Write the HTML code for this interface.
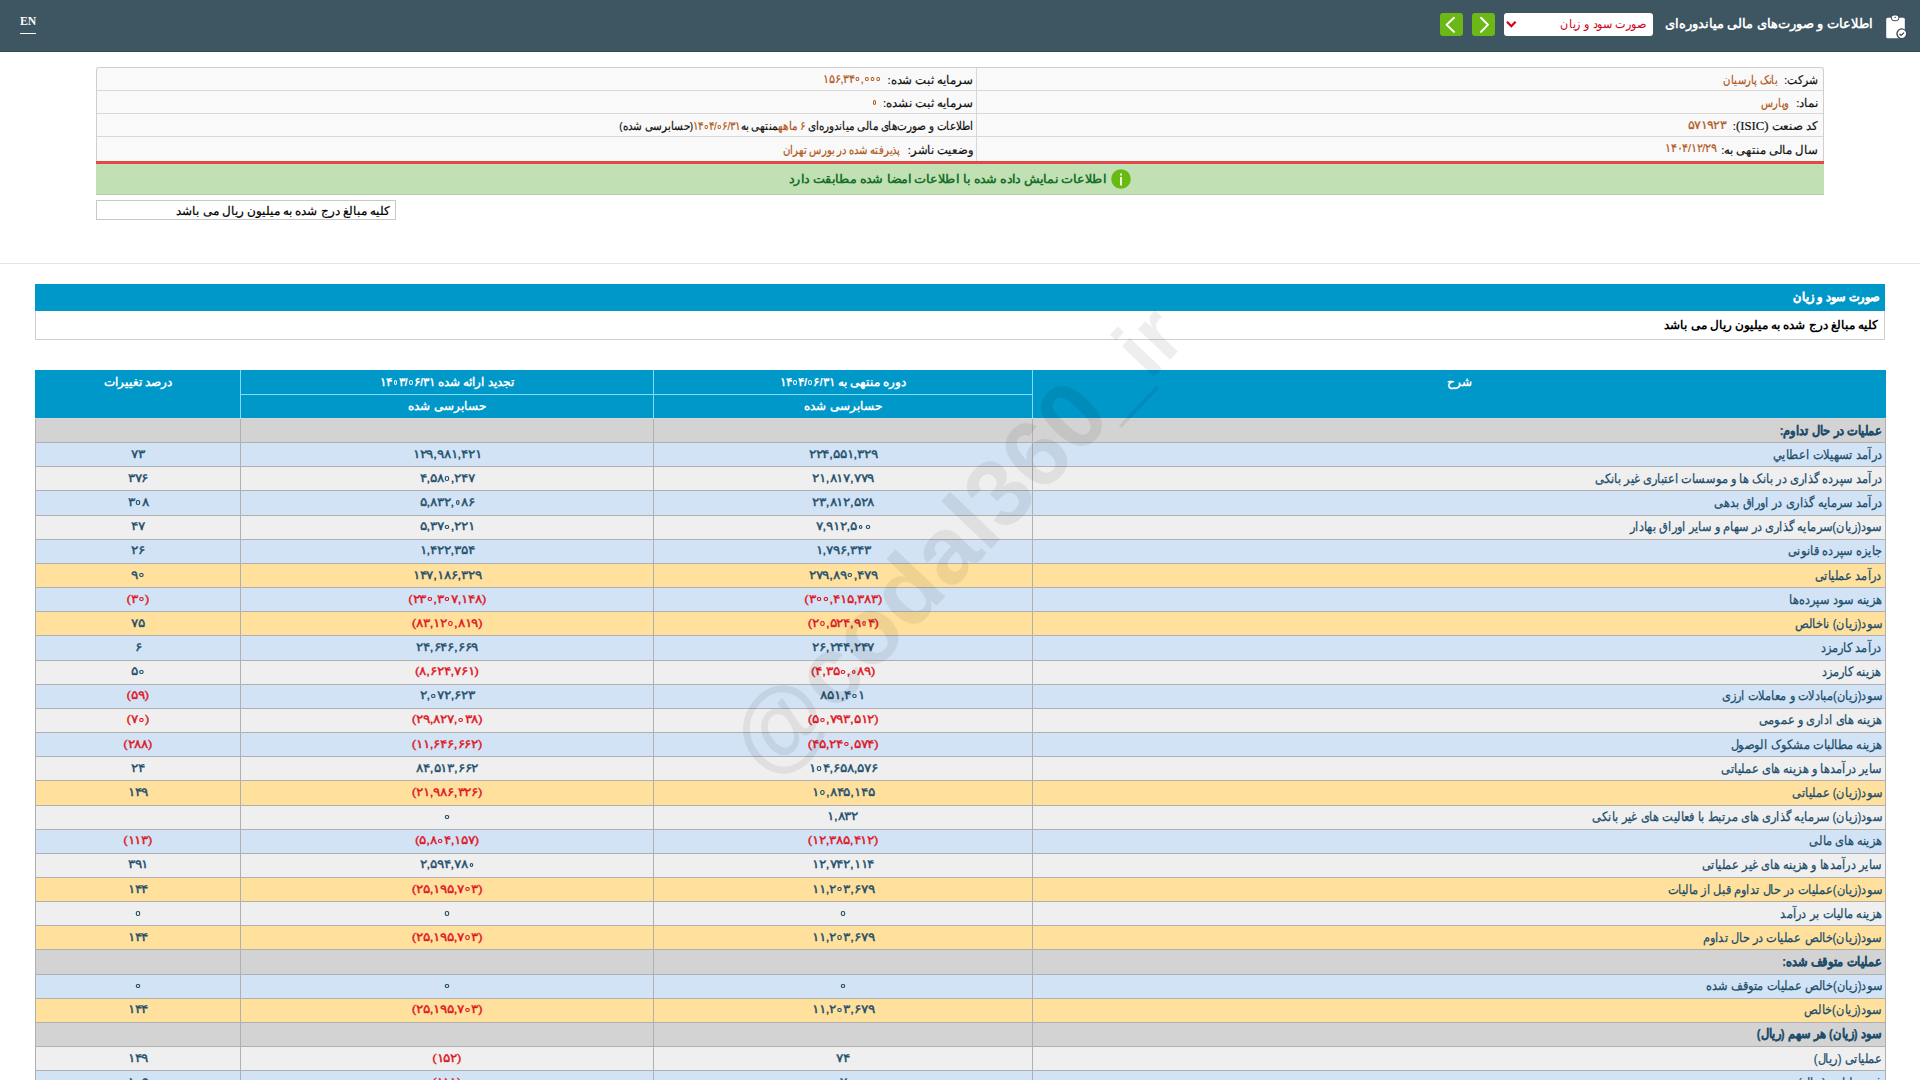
<!DOCTYPE html>
<html lang="fa" dir="rtl">
<head>
<meta charset="utf-8">
<style>
*{box-sizing:border-box;margin:0;padding:0}
html,body{width:1920px;height:1080px;overflow:hidden;background:#fff}
body{position:relative;font-family:"Liberation Sans",sans-serif;color:#000;direction:rtl}
.abs{position:absolute}
#hdr{left:0;top:0;width:1920px;height:52px;background:#3e5562;border-bottom:1px solid #38484f}
#en{left:20px;top:13px;font-family:"Liberation Serif",serif;font-size:13px;font-weight:bold;color:#fff;direction:ltr;line-height:16px;transform:scaleX(0.9);transform-origin:left center}
#en-u{left:20px;top:33px;width:16px;height:1px;background:#fff}
#clip{left:1878px;top:8px;width:40px;height:36px}
#title{right:47px;top:14px;font-size:13px;font-weight:bold;color:#fff;line-height:20px;white-space:nowrap}
#sel{left:1504px;top:13px;width:149px;height:23px;background:#fff;border-radius:3px}
#sel span{position:absolute;right:7px;top:3px;font-size:12px;color:#d0021b;line-height:16px;white-space:nowrap;transform:scaleX(0.93);transform-origin:right center}
#sel svg{position:absolute;left:1px;top:7px}
.gbtn{top:13px;width:23px;height:23px;background:#6cb816;border-radius:3px}
.gbtn svg{position:absolute;left:0;top:0}

#info{left:96px;top:67px;width:1728px;height:94px;background:#f9f9f9;border:1px solid #cfcfcf;border-bottom:none;border-radius:3px 3px 0 0}
.irow{position:absolute;left:0;width:1726px;height:23.2px;border-bottom:1px solid #d8d8d8}
.it{position:absolute;font-size:11.5px;-webkit-text-stroke:0.2px currentColor;line-height:12px;white-space:nowrap;transform-origin:right center}
.lab{color:#111}
.vsep{position:absolute;left:879px;top:0;width:1px;height:93px;background:#d8d8d8}
.val{color:#b25718}
#redl{left:96px;top:161px;width:1728px;height:3px;background:#e24a4a}
#green{left:96px;top:164px;width:1728px;height:31px;background:#c1e0b3;border-bottom:1px solid #b3ccaa}
#gtxt{right:718px;top:6px;font-size:12px;font-weight:bold;color:#16702a;line-height:18px;white-space:nowrap}
#gtxt{transform:scaleX(1.06);transform-origin:right center}
#ginfo{left:1015px;top:5px;width:20px;height:20px}
#smallbox{left:96px;top:200px;width:300px;height:20px;border:1px solid #c8c8c8;background:#fff}
#smallbox span{position:absolute;right:5px;top:2px;-webkit-text-stroke:0.2px currentColor;font-size:11.5px;line-height:16px;white-space:nowrap}
#sep{left:0;top:263px;width:1920px;height:1px;background:#e6e6e6}

#bluebar{left:35px;top:284px;width:1850px;height:27px;background:#0097c9}
#bluebar span{position:absolute;right:5px;top:5px;font-size:11.5px;font-weight:bold;-webkit-text-stroke:0.3px currentColor;color:#fff;line-height:16px;transform:scaleX(0.94);transform-origin:right center}
#descrow{left:35px;top:311px;width:1850px;height:29px;border:1px solid #cfcfcf;border-top:none;background:#fff}
#descrow span{position:absolute;right:6px;top:6px;font-size:11.5px;font-weight:bold;color:#000;line-height:16px}


#tbl{left:35px;top:370px;width:1850px;border-collapse:collapse;table-layout:fixed}
#tbl td,#tbl th{padding:0 3px;white-space:nowrap;overflow:hidden}
#tbl th{background:#0097c9;color:#fff;font-weight:bold;font-size:11.5px;border:1px solid #80dcf8;height:24px;vertical-align:top;line-height:22px;text-align:center}
#tbl thead tr:first-child th{border-top-color:#0097c9}
#tbl thead tr:first-child th:first-child{border-right-color:#0097c9}
#tbl thead tr:first-child th:last-child{border-left-color:#0097c9}
#tbl thead tr:last-child th,#tbl th[rowspan]{border-bottom-color:#d8d8d8}
#tbl tbody td{height:24.16px;border:1px solid #b0b0b0;font-size:11.5px;line-height:20px;color:#1d4d6b;vertical-align:middle}
#tbl td.d{text-align:right}
#tbl td.d span{display:inline-block;font-size:13px;-webkit-text-stroke:0.25px currentColor;transform:scaleX(0.875);transform-origin:right center}
#tbl td.n{text-align:center;font-weight:normal;-webkit-text-stroke:0.35px currentColor}
#tbl td.n span{display:inline-block;transform:scaleX(1.14);position:relative;top:-1px;direction:ltr;unicode-bidi:bidi-override}
b.z{display:inline-block;width:0.54em;height:0.7em;position:relative;vertical-align:baseline}
b.z:after{content:'';position:absolute;left:0.105em;bottom:0.104em;width:0.33em;height:0.383em;border:0.113em solid currentColor;border-radius:50%;box-sizing:border-box}
.ltr{direction:ltr;unicode-bidi:isolate}
#tbl td.neg{color:#e0141e}
#tbl tr.rb td{background:#d1e3f5}
#tbl tr.rg td{background:#efefef}
#tbl tr.ry td{background:#ffe19d}
#tbl tr.rcat td{background:#d3d3d3;font-weight:bold}
</style>
</head>
<body>
<div id="hdr" class="abs"></div>
<div id="en" class="abs">EN</div>
<div id="en-u" class="abs"></div>
<svg id="clip" class="abs" width="40" height="36" viewBox="0 0 40 36"><rect x="8.2" y="9.7" width="18.6" height="20.5" rx="1.5" fill="#fff"/><rect x="13.3" y="7" width="7.5" height="5.7" rx="2.6" fill="#fff" stroke="#3a4a52" stroke-width="1"/><path d="M16.3 10 L17.2 8.6 L18.1 10Z" fill="#3a4a52"/><circle cx="23.7" cy="25.7" r="5.4" fill="#354650"/><circle cx="23.9" cy="25.8" r="4.2" fill="#fff"/><path d="M21.6 26 L23.1 27.4 L26 24.6" stroke="#354650" stroke-width="1.3" fill="none"/></svg>
<div id="title" class="abs">اطلاعات و صورت‌های مالی میاندوره‌ای</div>
<div id="sel" class="abs"><span>صورت سود و زیان</span><svg width="13" height="9" viewBox="0 0 13 9"><path d="M2 1.8 L6.3 6.2 L10.6 1.8" stroke="#d0021b" stroke-width="2.3" fill="none"/></svg></div>
<div class="gbtn abs" style="left:1472px"><svg width="23" height="23" viewBox="0 0 23 23"><path d="M9 4.8 L16 11.7 L9 18.9" stroke="#fff" stroke-width="1.9" stroke-linecap="round" stroke-linejoin="round" fill="none"/></svg></div>
<div class="gbtn abs" style="left:1440px"><svg width="23" height="23" viewBox="0 0 23 23"><path d="M14 4.8 L6.6 11.7 L14 18.9" stroke="#fff" stroke-width="1.9" stroke-linecap="round" stroke-linejoin="round" fill="none"/></svg></div>

<div id="info" class="abs">
<div class="irow" style="top:0px;height:23px"></div>
<div class="irow" style="top:23px;height:23.3px"></div>
<div class="irow" style="top:46.3px;height:22.9px"></div>
<div class="irow" style="top:69.6px;border-bottom:none"></div>
<div class="vsep"></div>
<span class="it lab" style="right:5.0px;top:6.0px;transform:scaleX(0.890)">شرکت:</span>
<span class="it val" style="right:46.0px;top:6.0px;transform:scaleX(0.841)">بانک پارسیان</span>
<span class="it lab" style="right:5.0px;top:29.2px;transform:scaleX(0.991)">نماد:</span>
<span class="it val" style="right:34.0px;top:29.2px;transform:scaleX(0.824)">وپارس</span>
<span class="it lab" style="right:5.0px;top:52.4px;transform:scaleX(0.979)">کد صنعت <span style="font-family:'Liberation Serif',serif;font-size:13px">(ISIC)</span>:</span>
<span class="it val" style="right:97.0px;top:50.9px;transform:scaleX(1.056)">۵۷۱۹۲۳</span>
<span class="it lab" style="right:5.0px;top:75.6px;transform:scaleX(0.977)">سال مالی منتهی به:</span>
<span class="it val" style="right:107.0px;top:74.1px;transform:scaleX(0.938)">۱۴۰۴/۱۲/۲۹</span>
<span class="it lab" style="right:850.0px;top:6.0px;transform:scaleX(0.982)">سرمایه ثبت شده:</span>
<span class="it val" style="right:942.0px;top:4.5px;transform:scaleX(0.944)"><span class="ltr">۱۵۶,۳۴<b class="z"></b>,<b class="z"></b><b class="z"></b><b class="z"></b></span></span>
<span class="it lab" style="right:850.0px;top:29.2px;transform:scaleX(0.989)">سرمایه ثبت نشده:</span>
<span class="it val" style="right:945.4px;top:27.7px;transform:scaleX(1.000)"><b class="z"></b></span>
<span class="it lab" style="right:850.0px;top:52.4px;transform:scaleX(0.869)">اطلاعات و صورت‌های مالی میاندوره‌ای <span class="val">۶ ماهه</span>منتهی به<span class="val"><span class="ltr">۱۴<b class="z"></b>۴/<b class="z"></b>۶/۳۱</span></span>(حسابرسی شده)</span>
<span class="it lab" style="right:850.0px;top:75.6px;transform:scaleX(0.958)">وضعیت ناشر:</span>
<span class="it val" style="right:923.6px;top:75.6px;transform:scaleX(0.843)">پذیرفته شده در بورس تهران</span>
</div>
<div id="redl" class="abs"></div>
<div id="green" class="abs"><svg id="ginfo" class="abs" viewBox="0 0 20 20"><circle cx="10" cy="10" r="9.8" fill="#69b914"/><rect x="9" y="8" width="2" height="8.5" fill="#e8f8d8"/><rect x="9" y="4.5" width="2" height="2" fill="#e8f8d8"/></svg><div id="gtxt" class="abs">اطلاعات نمایش داده شده با اطلاعات امضا شده مطابقت دارد</div></div>
<div id="smallbox" class="abs"><span>کلیه مبالغ درج شده به میلیون ریال می باشد</span></div>
<div id="sep" class="abs"></div>

<div id="bluebar" class="abs"><span>صورت سود و زیان</span></div>
<div id="descrow" class="abs"><span>کلیه مبالغ درج شده به میلیون ریال می باشد</span></div>

<table id="tbl" class="abs">
<colgroup><col style="width:853px"><col style="width:379px"><col style="width:413px"><col style="width:205px"></colgroup>
<thead>
<tr><th rowspan="2">شرح</th><th>دوره منتهی به <span class="ltr">۱۴<b class="z"></b>۴/<b class="z"></b>۶/۳۱</span></th><th>تجدید ارائه شده <span class="ltr">۱۴<b class="z"></b>۳/<b class="z"></b>۶/۳۱</span></th><th rowspan="2">درصد تغییرات</th></tr>
<tr><th>حسابرسی شده</th><th>حسابرسی شده</th></tr>
</thead>
<tbody>
<!--TBODY-->
<tr class="rcat"><td class="d"><span>عملیات در حال تداوم:</span></td><td class="n"></td><td class="n"></td><td class="n"></td></tr>
<tr class="rb"><td class="d"><span>درآمد تسهیلات اعطايي</span></td><td class="n"><span>۲۲۴,۵۵۱,۳۲۹</span></td><td class="n"><span>۱۲۹,۹۸۱,۴۲۱</span></td><td class="n"><span>۷۳</span></td></tr>
<tr class="rg"><td class="d"><span>درآمد سپرده گذاری در بانک ها و موسسات اعتباری غیر بانکی</span></td><td class="n"><span>۲۱,۸۱۷,۷۷۹</span></td><td class="n"><span>۴,۵۸<b class="z"></b>,۲۴۷</span></td><td class="n"><span>۳۷۶</span></td></tr>
<tr class="rb"><td class="d"><span>درآمد سرمایه گذاری در اوراق بدهی</span></td><td class="n"><span>۲۳,۸۱۲,۵۲۸</span></td><td class="n"><span>۵,۸۳۲,<b class="z"></b>۸۶</span></td><td class="n"><span>۳<b class="z"></b>۸</span></td></tr>
<tr class="rg"><td class="d"><span>سود(زیان)سرمایه گذاری در سهام و سایر اوراق بهادار</span></td><td class="n"><span>۷,۹۱۲,۵<b class="z"></b><b class="z"></b></span></td><td class="n"><span>۵,۳۷<b class="z"></b>,۲۲۱</span></td><td class="n"><span>۴۷</span></td></tr>
<tr class="rb"><td class="d"><span>جایزه سپرده قانونی</span></td><td class="n"><span>۱,۷۹۶,۳۴۳</span></td><td class="n"><span>۱,۴۲۲,۳۵۴</span></td><td class="n"><span>۲۶</span></td></tr>
<tr class="ry"><td class="d"><span>درآمد عملیاتی</span></td><td class="n"><span>۲۷۹,۸۹<b class="z"></b>,۴۷۹</span></td><td class="n"><span>۱۴۷,۱۸۶,۳۲۹</span></td><td class="n"><span>۹<b class="z"></b></span></td></tr>
<tr class="rb"><td class="d"><span>هزینه سود سپرده‌ها</span></td><td class="n neg"><span>(۳<b class="z"></b><b class="z"></b>,۴۱۵,۳۸۳)</span></td><td class="n neg"><span>(۲۳<b class="z"></b>,۳<b class="z"></b>۷,۱۴۸)</span></td><td class="n neg"><span>(۳<b class="z"></b>)</span></td></tr>
<tr class="ry"><td class="d"><span>سود(زیان) ناخالص</span></td><td class="n neg"><span>(۲<b class="z"></b>,۵۲۴,۹<b class="z"></b>۴)</span></td><td class="n neg"><span>(۸۳,۱۲<b class="z"></b>,۸۱۹)</span></td><td class="n"><span>۷۵</span></td></tr>
<tr class="rb"><td class="d"><span>درآمد کارمزد</span></td><td class="n"><span>۲۶,۲۴۴,۲۴۷</span></td><td class="n"><span>۲۴,۶۴۶,۶۶۹</span></td><td class="n"><span>۶</span></td></tr>
<tr class="rg"><td class="d"><span>هزینه کارمزد</span></td><td class="n neg"><span>(۴,۳۵<b class="z"></b>,<b class="z"></b>۸۹)</span></td><td class="n neg"><span>(۸,۶۲۴,۷۶۱)</span></td><td class="n"><span>۵<b class="z"></b></span></td></tr>
<tr class="rb"><td class="d"><span>سود(زیان)مبادلات و معاملات ارزی</span></td><td class="n"><span>۸۵۱,۴<b class="z"></b>۱</span></td><td class="n"><span>۲,<b class="z"></b>۷۲,۶۲۳</span></td><td class="n neg"><span>(۵۹)</span></td></tr>
<tr class="rg"><td class="d"><span>هزینه های اداری و عمومی</span></td><td class="n neg"><span>(۵<b class="z"></b>,۷۹۳,۵۱۲)</span></td><td class="n neg"><span>(۲۹,۸۲۷,<b class="z"></b>۳۸)</span></td><td class="n neg"><span>(۷<b class="z"></b>)</span></td></tr>
<tr class="rb"><td class="d"><span>هزینه مطالبات مشکوک الوصول</span></td><td class="n neg"><span>(۴۵,۲۴<b class="z"></b>,۵۷۴)</span></td><td class="n neg"><span>(۱۱,۶۴۶,۶۶۲)</span></td><td class="n neg"><span>(۲۸۸)</span></td></tr>
<tr class="rg"><td class="d"><span>سایر درآمدها و هزینه های عملیاتی</span></td><td class="n"><span>۱<b class="z"></b>۴,۶۵۸,۵۷۶</span></td><td class="n"><span>۸۴,۵۱۳,۶۶۲</span></td><td class="n"><span>۲۴</span></td></tr>
<tr class="ry"><td class="d"><span>سود(زیان) عملیاتی</span></td><td class="n"><span>۱<b class="z"></b>,۸۴۵,۱۴۵</span></td><td class="n neg"><span>(۲۱,۹۸۶,۳۲۶)</span></td><td class="n"><span>۱۴۹</span></td></tr>
<tr class="rg"><td class="d"><span>سود(زیان) سرمایه گذاری های مرتبط با فعالیت های غیر بانکی</span></td><td class="n"><span>۱,۸۳۲</span></td><td class="n"><span><b class="z"></b></span></td><td class="n"></td></tr>
<tr class="rb"><td class="d"><span>هزینه های مالی</span></td><td class="n neg"><span>(۱۲,۳۸۵,۴۱۲)</span></td><td class="n neg"><span>(۵,۸<b class="z"></b>۴,۱۵۷)</span></td><td class="n neg"><span>(۱۱۳)</span></td></tr>
<tr class="rg"><td class="d"><span>سایر درآمدها و هزینه های غیر عملیاتی</span></td><td class="n"><span>۱۲,۷۴۲,۱۱۴</span></td><td class="n"><span>۲,۵۹۴,۷۸<b class="z"></b></span></td><td class="n"><span>۳۹۱</span></td></tr>
<tr class="ry"><td class="d"><span>سود(زیان)عملیات در حال تداوم قبل از مالیات</span></td><td class="n"><span>۱۱,۲<b class="z"></b>۳,۶۷۹</span></td><td class="n neg"><span>(۲۵,۱۹۵,۷<b class="z"></b>۳)</span></td><td class="n"><span>۱۴۴</span></td></tr>
<tr class="rg"><td class="d"><span>هزینه مالیات بر درآمد</span></td><td class="n"><span><b class="z"></b></span></td><td class="n"><span><b class="z"></b></span></td><td class="n"><span><b class="z"></b></span></td></tr>
<tr class="ry"><td class="d"><span>سود(زیان)خالص عملیات در حال تداوم</span></td><td class="n"><span>۱۱,۲<b class="z"></b>۳,۶۷۹</span></td><td class="n neg"><span>(۲۵,۱۹۵,۷<b class="z"></b>۳)</span></td><td class="n"><span>۱۴۴</span></td></tr>
<tr class="rcat"><td class="d"><span>عملیات متوقف شده:</span></td><td class="n"></td><td class="n"></td><td class="n"></td></tr>
<tr class="rb"><td class="d"><span>سود(زیان)خالص عملیات متوقف شده</span></td><td class="n"><span><b class="z"></b></span></td><td class="n"><span><b class="z"></b></span></td><td class="n"><span><b class="z"></b></span></td></tr>
<tr class="ry"><td class="d"><span>سود(زیان)خالص</span></td><td class="n"><span>۱۱,۲<b class="z"></b>۳,۶۷۹</span></td><td class="n neg"><span>(۲۵,۱۹۵,۷<b class="z"></b>۳)</span></td><td class="n"><span>۱۴۴</span></td></tr>
<tr class="rcat"><td class="d"><span>سود (زیان) هر سهم (ریال)</span></td><td class="n"></td><td class="n"></td><td class="n"></td></tr>
<tr class="rg"><td class="d"><span>عملیاتی (ریال)</span></td><td class="n"><span>۷۴</span></td><td class="n neg"><span>(۱۵۲)</span></td><td class="n"><span>۱۴۹</span></td></tr>
<tr class="rb"><td class="d"><span>غیرعملیاتی (ریال)</span></td><td class="n"><span>۷</span></td><td class="n neg"><span>(۱۱۱)</span></td><td class="n"><span>۱<b class="z"></b>۹</span></td></tr>
<!--/TBODY-->
</tbody>
</table>
<svg id="wm" class="abs" width="1920" height="1080" viewBox="0 0 1920 1080" style="left:0;top:0;pointer-events:none;direction:ltr"><text direction="ltr" text-anchor="start" x="0" y="0" transform="translate(770 781.5) rotate(-46.5)" font-family="Liberation Sans" font-weight="bold" font-size="95" fill="#000" fill-opacity="0.065">@codal360_<tspan font-size="84">ir</tspan></text></svg>
</body>
</html>
